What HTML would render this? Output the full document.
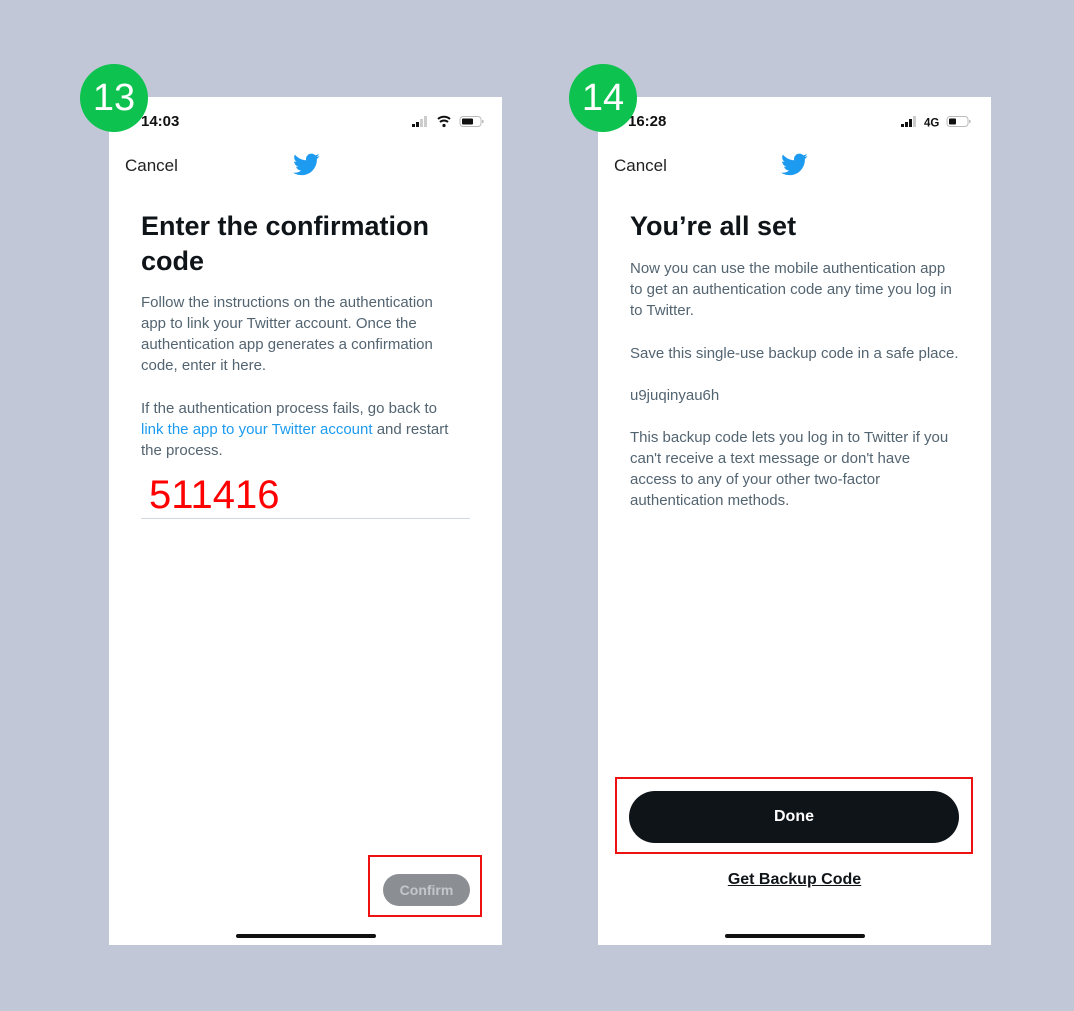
<!DOCTYPE html>
<html><head><style>
*{margin:0;padding:0;box-sizing:border-box}
body{width:1074px;height:1011px;background:#c2c7d7;position:relative;overflow:hidden;font-family:"Liberation Sans",sans-serif}
.ph{position:absolute;top:97px;width:393px;height:848px;background:#fff}
.a{position:absolute;white-space:nowrap}
.badge{position:absolute;width:68px;height:68px;border-radius:50%;background:#0dc24e;color:#fff;font-size:38px;text-align:center;line-height:68px;top:64px}
.time{font-size:15px;font-weight:bold;color:#111;top:16px}
.cancel{font-size:17px;color:#222;top:59px;left:16px}
.title{font-size:27px;font-weight:bold;color:#0f1419;line-height:35px;left:32px}
.p{font-size:15px;color:#536471;line-height:21px;left:32px}
.home{position:absolute;bottom:7px;left:127px;width:140px;height:4px;border-radius:2px;background:#111}
</style></head><body>

<div class="ph" style="left:109px">
 <div class="a time" style="left:32px">14:03</div>
 <svg class="a" style="left:303px;top:18px" width="72" height="14" viewBox="0 0 72 14">
  <rect x="0" y="9" width="3" height="3" fill="#111"/><rect x="4" y="7" width="3" height="5" fill="#111"/><rect x="8" y="4" width="3" height="8" fill="#ccc"/><rect x="12" y="1" width="3" height="11" fill="#ccc"/>
  <path d="M26 4a9 9 0 0 1 12 0M28 7a6 6 0 0 1 8 0" stroke="#111" stroke-width="2" fill="none"/><circle cx="32" cy="10.5" r="1.6" fill="#111"/>
  <rect x="48" y="1.5" width="21" height="10" rx="3" fill="none" stroke="#bbb"/><rect x="50" y="3.5" width="11" height="6" rx="1" fill="#111"/><rect x="70" y="5" width="1.5" height="3" fill="#bbb"/>
 </svg>
 <div class="a cancel">Cancel</div>
 <svg class="a" style="left:183px;top:56px" width="28" height="24" viewBox="0 0 24 20"><path fill="#1d9bf0" d="M23.643 2.437c-.835.37-1.732.62-2.675.733.962-.576 1.7-1.49 2.048-2.578-.9.534-1.897.922-2.958 1.130-.85-.904-2.060-1.470-3.400-1.470-2.572 0-4.658 2.086-4.658 4.660 0 .364.042.718.12 1.060-3.873-.195-7.304-2.050-9.602-4.868-.4.69-.63 1.490-.63 2.342 0 1.616.823 3.043 2.072 3.878-.764-.025-1.482-.234-2.110-.583v.06c0 2.257 1.605 4.140 3.737 4.568-.392.106-.803.162-1.227.162-.3 0-.593-.028-.877-.082.593 1.850 2.313 3.198 4.352 3.234-1.595 1.250-3.604 1.995-5.786 1.995-.376 0-.747-.022-1.112-.065 2.062 1.323 4.510 2.093 7.140 2.093 8.570 0 13.255-7.098 13.255-13.254 0-.2-.005-.402-.014-.602.910-.658 1.700-1.478 2.323-2.410z"/></svg>
 <div class="a title" style="top:112px">Enter the confirmation<br>code</div>
 <div class="a p" style="top:195px">Follow the instructions on the authentication<br>app to link your Twitter account. Once the<br>authentication app generates a confirmation<br>code, enter it here.</div>
 <div class="a p" style="top:301px">If the authentication process fails, go back to<br><span style="color:#1d9bf0">link the app to your Twitter account</span> and restart<br>the process.</div>
 <div class="a" style="left:40px;top:374px;font-size:40px;color:#ff0000;line-height:48px">511416</div>
 <div class="a" style="left:32px;top:421px;width:329px;height:1px;background:#cfd9de"></div>
 <div class="a" style="left:259px;top:758px;width:114px;height:62px;border:2px solid #ee1111"></div>
 <div class="a" style="left:274px;top:777px;width:87px;height:32px;border-radius:16px;background:#8b8f93;color:#c4c7ca;font-weight:bold;font-size:14px;text-align:center;line-height:32px">Confirm</div>
 <div class="home"></div>
</div>

<div class="ph" style="left:598px">
 <div class="a time" style="left:30px">16:28</div>
 <svg class="a" style="left:303px;top:18px" width="72" height="14" viewBox="0 0 72 14">
  <rect x="0" y="9" width="3" height="3" fill="#111"/><rect x="4" y="7" width="3" height="5" fill="#111"/><rect x="8" y="4" width="3" height="8" fill="#111"/><rect x="12" y="1" width="3" height="11" fill="#ccc"/>
  <text x="23" y="11.5" font-size="11.5" font-weight="bold" fill="#111" font-family="Liberation Sans">4G</text>
  <rect x="46" y="1.5" width="21" height="10" rx="3" fill="none" stroke="#bbb"/><rect x="48" y="3.5" width="7" height="6" rx="1" fill="#111"/><rect x="68" y="5" width="1.5" height="3" fill="#bbb"/>
 </svg>
 <div class="a cancel">Cancel</div>
 <svg class="a" style="left:182px;top:56px" width="28" height="24" viewBox="0 0 24 20"><path fill="#1d9bf0" d="M23.643 2.437c-.835.37-1.732.62-2.675.733.962-.576 1.7-1.49 2.048-2.578-.9.534-1.897.922-2.958 1.130-.85-.904-2.060-1.470-3.400-1.470-2.572 0-4.658 2.086-4.658 4.660 0 .364.042.718.12 1.060-3.873-.195-7.304-2.050-9.602-4.868-.4.69-.63 1.490-.63 2.342 0 1.616.823 3.043 2.072 3.878-.764-.025-1.482-.234-2.110-.583v.06c0 2.257 1.605 4.140 3.737 4.568-.392.106-.803.162-1.227.162-.3 0-.593-.028-.877-.082.593 1.850 2.313 3.198 4.352 3.234-1.595 1.250-3.604 1.995-5.786 1.995-.376 0-.747-.022-1.112-.065 2.062 1.323 4.510 2.093 7.140 2.093 8.570 0 13.255-7.098 13.255-13.254 0-.2-.005-.402-.014-.602.910-.658 1.700-1.478 2.323-2.410z"/></svg>
 <div class="a title" style="top:112px">You’re all set</div>
 <div class="a p" style="top:161px">Now you can use the mobile authentication app<br>to get an authentication code any time you log in<br>to Twitter.</div>
 <div class="a p" style="top:246px">Save this single-use backup code in a safe place.</div>
 <div class="a p" style="top:288px">u9juqinyau6h</div>
 <div class="a p" style="top:330px">This backup code lets you log in to Twitter if you<br>can't receive a text message or don't have<br>access to any of your other two-factor<br>authentication methods.</div>
 <div class="a" style="left:17px;top:680px;width:358px;height:77px;border:2px solid #ee1111"></div>
 <div class="a" style="left:31px;top:694px;width:330px;height:52px;border-radius:26px;background:#0f1419;color:#fff;font-weight:bold;font-size:16px;text-align:center;line-height:52px">Done</div>
 <div class="a" style="left:0;width:393px;top:774px;text-align:center;font-weight:bold;font-size:16px;color:#0f1419;text-decoration:underline">Get Backup Code</div>
 <div class="home"></div>
</div>

<div class="badge" style="left:80px">13</div>
<div class="badge" style="left:569px">14</div>
</body></html>
